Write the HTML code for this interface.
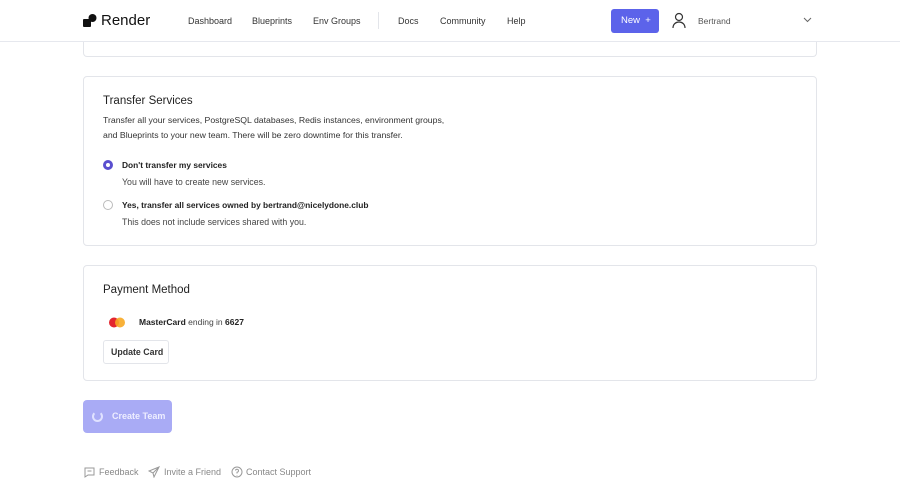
<!DOCTYPE html>
<html><head><style>
*{box-sizing:border-box;margin:0;padding:0}
body{width:900px;height:484px;overflow:hidden;background:#fff;font-family:"Liberation Sans",sans-serif;color:#222;position:relative}
.nav{position:absolute;left:0;top:0;width:900px;height:42px;border-bottom:1px solid #e6e8ee;background:#fff}
.t{position:absolute;white-space:nowrap}
.card{position:absolute;left:83px;width:734px;border:1px solid #e3e5ea;border-radius:4px;background:#fff}
</style></head><body>
<div class="card" style="top:20px;height:37px;border-top:none;border-radius:0 0 4px 4px"></div>
<div class="nav">
 <svg class="t" style="left:83px;top:14px" width="14" height="13" viewBox="0 0 14 13"><rect x="0" y="5" width="8" height="8" rx="1" fill="#111"/><circle cx="9.5" cy="4" r="4" fill="#111"/></svg>
 <div class="t" style="left:101px;top:12px;font-size:15px;color:#111">Render</div>
 <div class="t" style="left:188px;top:16px;font-size:9px;color:#333">Dashboard</div>
 <div class="t" style="left:252px;top:16px;font-size:9px;color:#333">Blueprints</div>
 <div class="t" style="left:313px;top:16px;font-size:9px;color:#333">Env Groups</div>
 <div class="t" style="left:378px;top:12px;width:1px;height:17px;background:#e3e5ea"></div>
 <div class="t" style="left:398px;top:16px;font-size:9px;color:#333">Docs</div>
 <div class="t" style="left:440px;top:16px;font-size:9px;color:#333">Community</div>
 <div class="t" style="left:507px;top:16px;font-size:9px;color:#333">Help</div>
 <div class="t" style="left:611px;top:9px;width:48px;height:24px;background:#5c63ea;border-radius:3px;color:#fff;font-size:9.5px;padding:6px 0 0 10px">New &nbsp;+</div>
 <svg class="t" style="left:671px;top:12px" width="16" height="17" viewBox="0 0 16 17" fill="none" stroke="#333" stroke-width="1.2"><circle cx="8" cy="5" r="3.5"/><path d="M2 16c0-4 3-6 6-6s6 2 6 6"/></svg>
 <div class="t" style="left:698px;top:16px;font-size:8.5px;color:#555">Bertrand</div>
 <svg class="t" style="left:803px;top:17px" width="9" height="6" viewBox="0 0 9 6" fill="none" stroke="#666" stroke-width="1"><path d="M1 1l3.5 3.5L8 1"/></svg>
</div>
<div class="card" style="top:76px;height:170px">
 <div class="t" style="left:19px;top:18px;font-size:11.5px;color:#222">Transfer Services</div>
 <div class="t" style="left:19px;top:36px;font-size:8.7px;line-height:15px;color:#333">Transfer all your services, PostgreSQL databases, Redis instances, environment groups,<br>and Blueprints to your new team. There will be zero downtime for this transfer.</div>
 <div class="t" style="left:19px;top:83px;width:10px;height:10px;border-radius:50%;border:3px solid #5a4fcf"></div>
 <div class="t" style="left:38px;top:83px;font-size:8.4px;font-weight:bold;color:#222">Don't transfer my services</div>
 <div class="t" style="left:38px;top:100px;font-size:8.8px;color:#444">You will have to create new services.</div>
 <div class="t" style="left:19px;top:123px;width:10px;height:10px;border-radius:50%;border:1px solid #bbb"></div>
 <div class="t" style="left:38px;top:123px;font-size:8.4px;font-weight:bold;color:#222">Yes, transfer all services owned by bertrand@nicelydone.club</div>
 <div class="t" style="left:38px;top:140px;font-size:8.8px;color:#444">This does not include services shared with you.</div>
</div>
<div class="card" style="top:265px;height:116px">
 <div class="t" style="left:19px;top:18px;font-size:11.5px;color:#222">Payment Method</div>
 <svg class="t" style="left:24px;top:51px" width="18" height="11"><circle cx="6" cy="5.5" r="5" fill="#e3262f"/><circle cx="12" cy="5.5" r="5" fill="#f7a823" opacity=".9"/></svg>
 <div class="t" style="left:55px;top:51px;font-size:8.5px;color:#444"><b style="color:#222">MasterCard</b> ending in <b style="color:#222">6627</b></div>
 <div class="t" style="left:19px;top:74px;width:66px;height:24px;border:1px solid #e3e5ea;border-radius:3px;font-size:8.8px;font-weight:bold;padding:6px 0 0 7px;color:#333">Update Card</div>
</div>
<div class="t" style="left:83px;top:400px;width:89px;height:33px;background:#a9abf5;border-radius:4px">
 <div class="t" style="left:9px;top:11px;width:11px;height:11px;border-radius:50%;border:2px solid #e0e2ff;border-top-color:transparent"></div>
 <div class="t" style="left:29px;top:11px;font-size:9px;color:#eef;font-weight:bold">Create Team</div>
</div>
<svg class="t" style="left:84px;top:467px" width="11" height="11" fill="none" stroke="#999" stroke-width="1"><path d="M1 1h9v7H4l-3 2z"/><path d="M3.5 4h4"/></svg>
<div class="t" style="left:99px;top:467px;font-size:9px;color:#888">Feedback</div>
<svg class="t" style="left:148px;top:466px" width="12" height="12" fill="none" stroke="#999" stroke-width="1"><path d="M11 1L1 5l4 2 1 4z M5 7l6-6"/></svg>
<div class="t" style="left:164px;top:467px;font-size:9px;color:#888">Invite a Friend</div>
<svg class="t" style="left:231px;top:466px" width="12" height="12" fill="none" stroke="#999" stroke-width="1"><circle cx="6" cy="6" r="5"/><path d="M4.5 4.5a1.5 1.5 0 1 1 1.5 1.7V7.5M6 9v.5"/></svg>
<div class="t" style="left:246px;top:467px;font-size:9px;color:#888">Contact Support</div>
</body></html>
